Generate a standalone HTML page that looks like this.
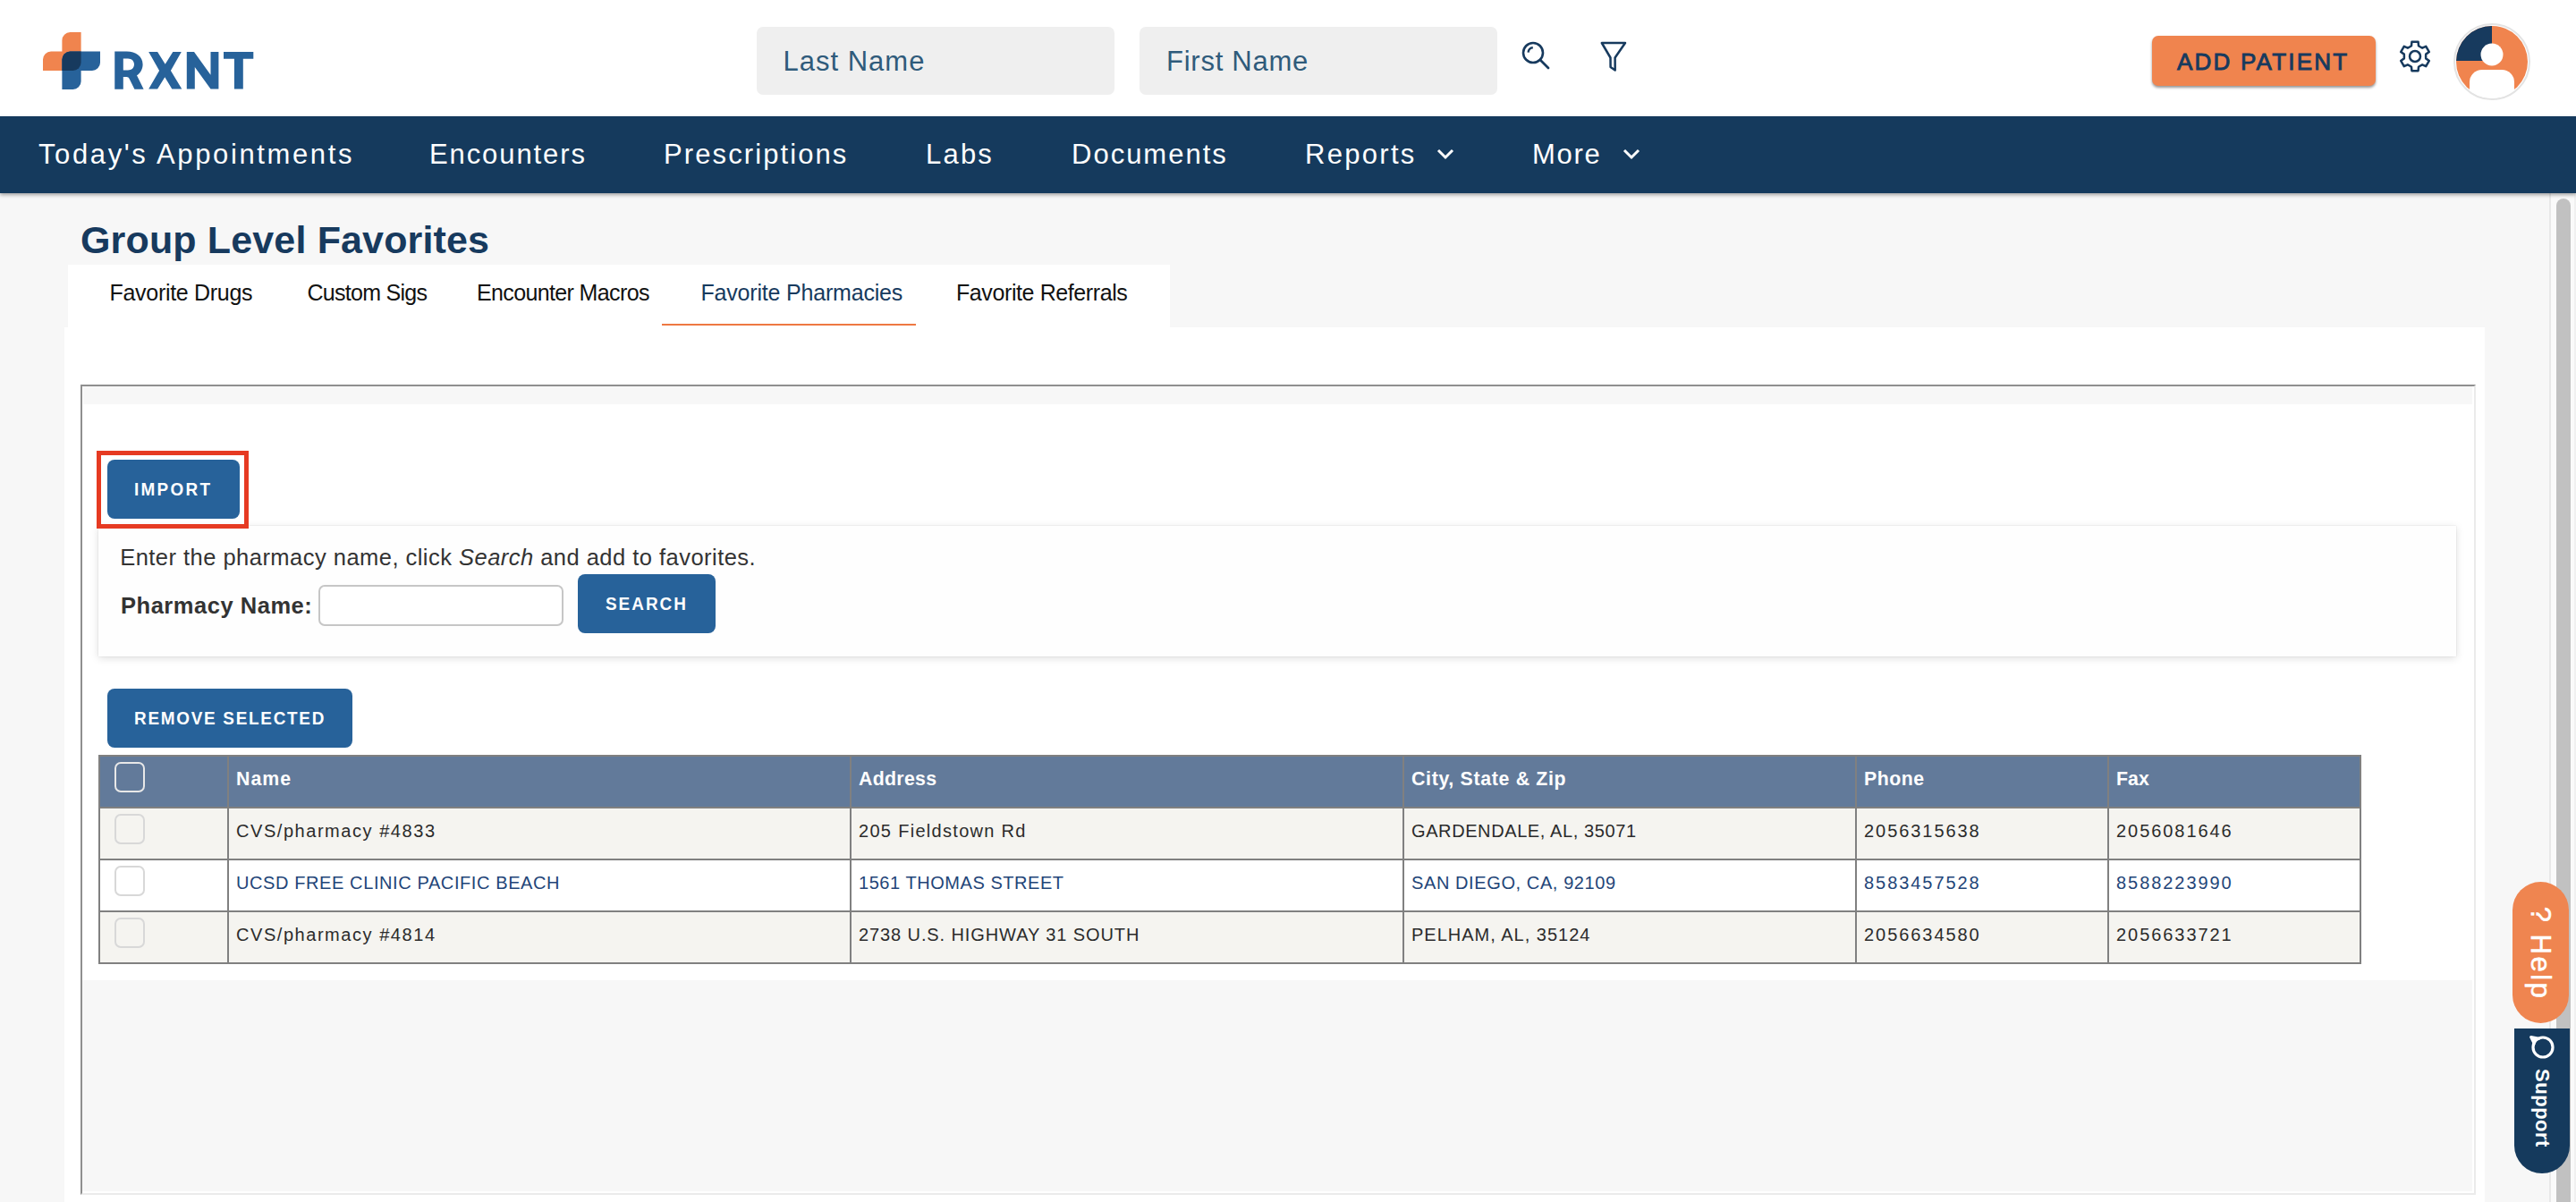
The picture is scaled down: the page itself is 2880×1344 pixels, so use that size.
<!DOCTYPE html>
<html><head><meta charset="utf-8">
<style>
*{box-sizing:border-box;margin:0;padding:0}
html,body{width:2880px;height:1344px;overflow:hidden;background:#f7f7f7;font-family:"Liberation Sans",sans-serif;}
.abs{position:absolute}
#hdr{left:0;top:0;width:2880px;height:130px;background:#fff}
.inp{background:#efefef;border-radius:7px;height:76px;top:30px;width:400px}
.ph{color:#2f5b7b;font-size:31px;white-space:nowrap;line-height:1}
#nav{left:0;top:130px;width:2880px;height:86px;background:#153a5d;box-shadow:0 2px 4px rgba(0,0,0,.35);z-index:2}
.ni{color:#fff;font-size:31px;line-height:1;white-space:nowrap;top:27px}
.sb{z-index:1}
.tab{font-size:25px;color:#111;line-height:1;white-space:nowrap;top:315px}
.btn{background:#27629a;border-radius:8px;color:#fff;font-size:21px;font-weight:bold;line-height:1;white-space:nowrap}
.btn span{transform:scaleX(0.9);transform-origin:0 0}
.btn span{position:absolute}
table{border-collapse:collapse;position:absolute;left:110px;top:844px;table-layout:fixed}
td,th{border:2px solid #808080;height:58px;padding:15px 0 0 8px;text-align:left;vertical-align:top;white-space:nowrap;font-size:20px;line-height:20px}
.m{letter-spacing:1.55px}.m2{letter-spacing:1.3px}.c{letter-spacing:0.6px}.c2{letter-spacing:0.9px}.d{letter-spacing:1.94px}
th{background:#627a9a;color:#fff;font-weight:bold;font-size:21.3px}
tr.o td{background:#f5f4f0;color:#2b2b2b}
tr.e td{background:#fff;color:#234578}
.cb{position:absolute;width:34px;height:34px;border:2px solid #d8d8d8;border-radius:7px}
</style></head><body>
<div id="hdr" class="abs">
  <svg class="abs" style="left:0;top:0" width="300" height="130">
    <path d="M69.4,45 A9,9 0 0 1 78.4,36 L90.6,36 L90.6,70 A9,9 0 0 1 81.6,79 L48,79 L48,66.5 A9,9 0 0 1 57,57.5 L69.4,57.5 Z" fill="#f0844e"/>
    <path d="M69.4,66.5 A9,9 0 0 1 78.4,57.5 L112,57.5 L112,70 A9,9 0 0 1 103,79 L90.6,79 L90.6,91 A9,9 0 0 1 81.6,100 L69.4,100 Z" fill="#27629a"/>
    <path d="M69.4,66.5 A9,9 0 0 1 78.4,57.5 L90.6,57.5 L90.6,70 A9,9 0 0 1 81.6,79 L69.4,79 Z" fill="#173a5e"/>
    <path fill="#27629a" fill-rule="evenodd" d="M128.25,57.6 L141.5,57.6 C152,57.6 159.6,63.5 159.6,72 C159.6,77.5 156.5,82.2 153,84.3 L160.6,99.8 L150.4,99.8 L144.7,88.3 C144,86.8 143,86 141.5,86 L137.8,86 L137.8,99.8 L128.25,99.8 Z M137.8,65.5 L143,65.5 C147.2,65.5 150,68.3 150,71.9 C150,75.6 147.2,78.4 143,78.4 L137.8,78.4 Z"/>
    <path fill="#27629a" d="M166.2,57.9 L176.1,57.9 L184.7,71.8 L193.3,57.9 L202.8,57.9 L190.9,79 L203.3,99.6 L192.3,99.6 L184.3,86.3 L176.1,99.6 L166.2,99.6 L178.1,79 Z"/>
    <path fill="#27629a" d="M208.8,57.9 L217,57.9 L235.5,83.7 L235.5,57.9 L244.4,57.9 L244.4,99.6 L235.5,99.6 L217.8,75.1 L217.8,99.6 L208.8,99.6 Z"/>
    <path fill="#27629a" d="M250,57.9 L283.3,57.9 L283.3,65.8 L271.8,65.8 L271.8,99.6 L261.9,99.6 L261.9,65.8 L250,65.8 Z"/>
  </svg>
  <div class="abs inp" style="left:846px"><span class="abs ph" style="left:29.5px;top:22.5px;letter-spacing:1px">Last Name</span></div>
  <div class="abs inp" style="left:1274px"><span class="abs ph" style="left:30px;top:22.5px;letter-spacing:0.75px">First Name</span></div>
  <svg class="abs" style="left:1696px;top:40px" width="44" height="44" viewBox="0 0 44 44">
    <circle cx="18" cy="19" r="11" fill="none" stroke="#173a5e" stroke-width="2.6"/>
    <path d="M12.6,18.6 A5.6,5.6 0 0 1 17.8,13.2" fill="none" stroke="#173a5e" stroke-width="2.4"/>
    <line x1="26" y1="27" x2="35" y2="36" stroke="#173a5e" stroke-width="2.8" stroke-linecap="round"/>
  </svg>
  <svg class="abs" style="left:1786px;top:42px" width="36" height="42" viewBox="0 0 36 42">
    <path d="M4.8,6 L31,6 L19.6,22.5 L19.7,36.6 L14.6,33 L14.5,22.5 Z" fill="none" stroke="#173a5e" stroke-width="2.5" stroke-linejoin="round"/>
  </svg>
  <div class="abs" style="left:2406px;top:40px;width:250px;height:56px;background:#f0844e;border-radius:7px;box-shadow:0 2px 3px rgba(0,0,0,.42)">
    <span class="abs" style="left:28px;top:16px;font-size:26px;color:#173a5e;letter-spacing:2.2px;-webkit-text-stroke:0.9px #173a5e;line-height:1;white-space:nowrap">ADD PATIENT</span>
  </div>
  <svg class="abs" style="left:2680px;top:43px" width="40" height="40" viewBox="0 0 40 40">
    <path fill="none" stroke="#173a5e" stroke-width="2.5" stroke-linejoin="round" d="M13.95,9.52 L15.96,8.28 L16.41,3.79 L23.59,3.79 L24.04,8.28 L26.05,9.52 L28.14,10.64 L32.24,8.79 L35.83,15.01 L32.17,17.63 L32.10,20.00 L32.17,22.37 L35.83,24.99 L32.24,31.21 L28.14,29.36 L26.05,30.48 L24.04,31.72 L23.59,36.21 L16.41,36.21 L15.96,31.72 L13.95,30.48 L11.86,29.36 L7.76,31.21 L4.17,24.99 L7.83,22.37 L7.90,20.00 L7.83,17.63 L4.17,15.01 L7.76,8.79 L11.86,10.64 Z"/>
    <circle cx="20" cy="20" r="6" fill="none" stroke="#173a5e" stroke-width="2.5"/>
  </svg>
  <svg class="abs" style="left:2739px;top:21.5px" width="94" height="94" viewBox="0 0 94 94">
    <defs><clipPath id="av"><circle cx="47" cy="47" r="40"/></clipPath><clipPath id="av2"><circle cx="47" cy="47" r="40.8"/></clipPath></defs>
    <circle cx="47" cy="47" r="42" fill="#fff" stroke="#e3e3e3" stroke-width="2"/>
    <g clip-path="url(#av)">
      <rect x="0" y="0" width="94" height="94" fill="#f0844e"/>
      <path d="M47,46 L5,46 A42,42 0 0 1 47,4 Z" fill="#173a5e"/>
    </g>
    <circle cx="47" cy="39" r="12.5" fill="#fff"/>
    <g clip-path="url(#av2)"><rect x="22" y="56" width="50" height="60" rx="14" fill="#fff"/></g>
  </svg>
</div>
<div id="nav" class="abs">
  <span class="abs ni" style="left:43px;letter-spacing:2.62px">Today's Appointments</span>
  <span class="abs ni" style="left:480px;letter-spacing:1.9px">Encounters</span>
  <span class="abs ni" style="left:742px;letter-spacing:2.1px">Prescriptions</span>
  <span class="abs ni" style="left:1035px;letter-spacing:2.2px">Labs</span>
  <span class="abs ni" style="left:1198px;letter-spacing:2px">Documents</span>
  <span class="abs ni" style="left:1459px;letter-spacing:2.3px">Reports</span>
  <span class="abs ni" style="left:1713px;letter-spacing:1.7px">More</span>
  <svg class="abs" style="left:1604px;top:34px" width="24" height="16"><path d="M4,4 L12,12 L20,4" fill="none" stroke="#fff" stroke-width="3"/></svg>
  <svg class="abs" style="left:1812px;top:34px" width="24" height="16"><path d="M4,4 L12,12 L20,4" fill="none" stroke="#fff" stroke-width="3"/></svg>
</div>
<!-- scrollbar -->
<div class="abs sb" style="left:2850px;top:216px;width:30px;height:1128px;background:#fafafa;border-left:2px solid #e8e8e8;border-right:2px solid #f0f0f0"></div>
<div class="abs sb" style="left:2858px;top:222px;width:16px;height:1140px;background:#c1c1c1;border-radius:8px"></div>

<!-- title -->
<div class="abs" style="left:90px;top:247.4px;font-size:43px;font-weight:bold;color:#173a5e;line-height:1;white-space:nowrap;letter-spacing:0.15px">Group Level Favorites</div>
<div class="abs" style="left:76px;top:296px;width:1232px;height:70px;background:#fff"></div>
<span class="abs tab" style="left:122.5px;letter-spacing:-0.3px">Favorite Drugs</span>
<span class="abs tab" style="left:343.5px;letter-spacing:-0.72px">Custom Sigs</span>
<span class="abs tab" style="left:533px;letter-spacing:-0.63px">Encounter Macros</span>
<span class="abs tab" style="left:783.5px;color:#173a5e;letter-spacing:-0.19px">Favorite Pharmacies</span>
<span class="abs tab" style="left:1069px;letter-spacing:-0.4px">Favorite Referrals</span>
<div class="abs" style="left:740px;top:362px;width:284px;height:2px;background:#ee7842"></div>

<!-- panel -->
<div class="abs" style="left:72px;top:366px;width:2706px;height:978px;background:#fff"></div>
<div class="abs" style="left:90px;top:430px;width:2678px;height:906px;border:2px solid;border-color:#8f8f8f #ebebeb #ebebeb #8f8f8f;background:#fff"></div>
<div class="abs" style="left:93px;top:432px;width:2671px;height:20px;background:#f7f7f7"></div>
<div class="abs" style="left:92px;top:1096px;width:2672px;height:236px;background:#f7f7f7"></div>

<!-- import -->
<div class="abs" style="left:108px;top:503.5px;width:170px;height:87px;border:5px solid #e63a22;z-index:2"></div>
<div class="abs btn" style="left:120px;top:514px;width:148px;height:66px"><span style="left:29.8px;top:22.3px;letter-spacing:2.56px">IMPORT</span></div>

<!-- search card -->
<div class="abs" style="left:110px;top:588px;width:2636px;height:146px;background:#fefefe;box-shadow:0 0 1.5px rgba(0,0,0,.12),0 2px 9px rgba(0,0,0,.13)"></div>
<div class="abs" style="left:134.2px;top:610.6px;font-size:25.5px;color:#333;line-height:1;white-space:nowrap;letter-spacing:0.47px">Enter the pharmacy name, click <i>Search</i> and add to favorites.</div>
<div class="abs" style="left:135px;top:664.7px;font-size:25.5px;color:#333;font-weight:bold;line-height:1;white-space:nowrap;letter-spacing:0.53px">Pharmacy Name:</div>
<div class="abs" style="left:356px;top:654px;width:274px;height:46px;border:2px solid #c6c6c6;border-radius:7px;background:#fff"></div>
<div class="abs btn" style="left:646px;top:642px;width:154px;height:66px"><span style="left:31px;top:21.6px;letter-spacing:2.24px">SEARCH</span></div>

<div class="abs btn" style="left:120px;top:770px;width:274px;height:66px"><span style="left:29.5px;top:21.5px;letter-spacing:1.93px">REMOVE SELECTED</span></div>

<table>
<colgroup><col style="width:144px"><col style="width:696px"><col style="width:618px"><col style="width:506px"><col style="width:282px"><col style="width:282px"></colgroup>
<tr><th></th><th style="letter-spacing:1.07px">Name</th><th style="letter-spacing:0.3px">Address</th><th style="letter-spacing:0.68px">City, State &amp; Zip</th><th style="letter-spacing:0.5px">Phone</th><th style="letter-spacing:0.1px">Fax</th></tr>
<tr class="o"><td></td><td class="m">CVS/pharmacy #4833</td><td class="m2">205 Fieldstown Rd</td><td class="c">GARDENDALE, AL, 35071</td><td class="d">2056315638</td><td class="d">2056081646</td></tr>
<tr class="e"><td></td><td class="c">UCSD FREE CLINIC PACIFIC BEACH</td><td class="c2" style="letter-spacing:0.55px">1561 THOMAS STREET</td><td class="c">SAN DIEGO, CA, 92109</td><td class="d">8583457528</td><td class="d">8588223990</td></tr>
<tr class="o"><td></td><td class="m">CVS/pharmacy #4814</td><td class="c2">2738 U.S. HIGHWAY 31 SOUTH</td><td class="c" style="letter-spacing:1px">PELHAM, AL, 35124</td><td class="d">2056634580</td><td class="d">2056633721</td></tr>
</table>
<div class="cb" style="left:128px;top:852px;border-color:#e8e8e8"></div>
<div class="cb" style="left:128px;top:910px"></div>
<div class="cb" style="left:128px;top:968px"></div>
<div class="cb" style="left:128px;top:1026px"></div>

<!-- help / support -->
<div class="abs" style="left:2809px;top:986px;width:63px;height:158px;background:#ef8550;border-radius:32px;z-index:3">
  <span class="abs" style="left:-33.5px;top:62.5px;width:128px;text-align:center;color:#fff;font-size:31px;line-height:31.5px;transform:rotate(90deg);white-space:nowrap;letter-spacing:2.5px;text-indent:2.5px;-webkit-text-stroke:0.5px #fff">? Help</span>
</div>
<div class="abs" style="left:2811px;top:1150px;width:62px;height:162px;background:#153a5d;border-radius:0 0 31px 31px;z-index:3">
  <svg class="abs" style="left:14.5px;top:4px" width="34" height="34" viewBox="0 0 34 34"><circle cx="17" cy="17" r="11" fill="none" stroke="#fff" stroke-width="3.2"/><path d="M7.2,12.8 L3.6,5.6 L12.8,7.2" fill="#fff" stroke="#fff" stroke-width="3" stroke-linejoin="round" stroke-linecap="round"/></svg>
  <span class="abs" style="left:-13px;top:78px;width:88px;text-align:center;color:#fff;font-size:22px;font-weight:bold;line-height:22px;transform:rotate(90deg);white-space:nowrap;letter-spacing:0.5px">Support</span>
</div>
</body></html>
